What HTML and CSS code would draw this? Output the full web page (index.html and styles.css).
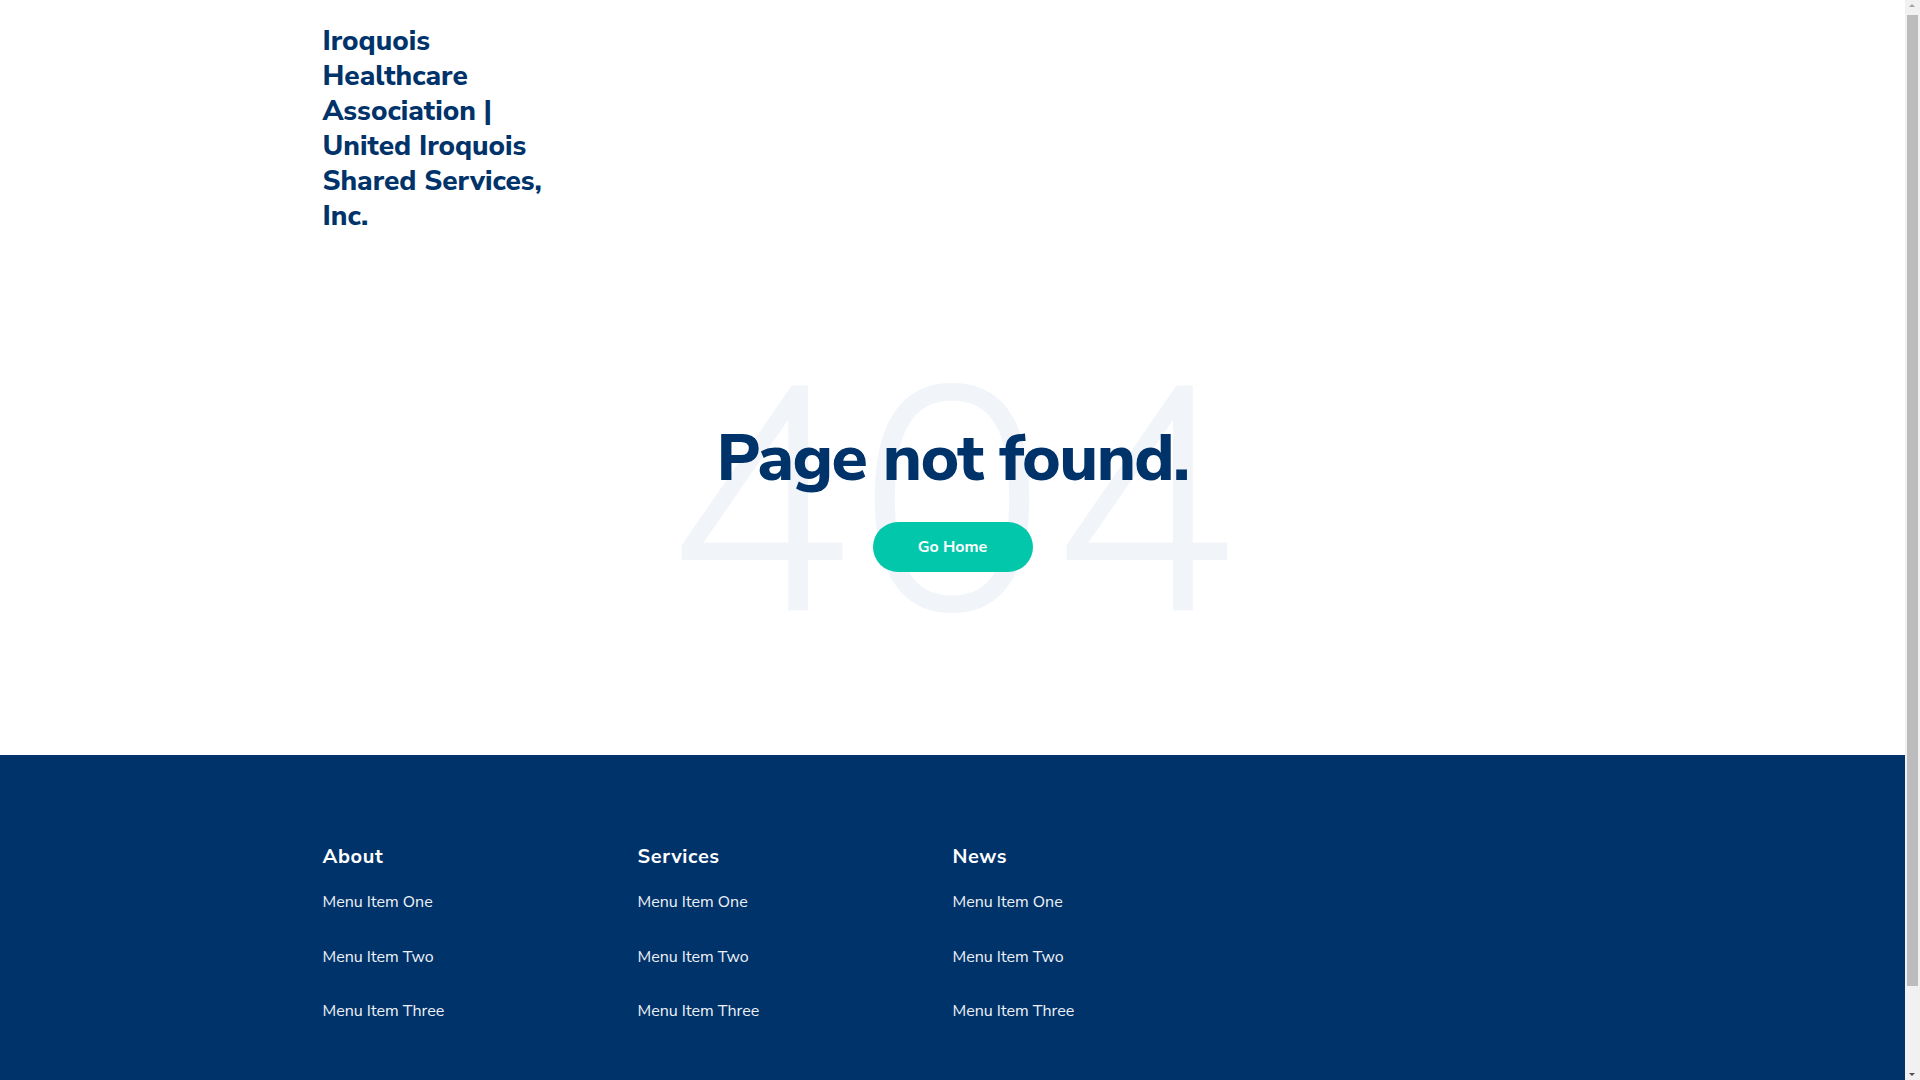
FILE: index.html
```html
<!DOCTYPE html>
<html lang="en">
<head>
<meta charset="utf-8">
<title>Page not found | Iroquois Healthcare Association</title>
<link rel="stylesheet" href="styles.css">
</head>
<body>
<div class="page">
  <header class="site-header">
    <div class="container">
      <a class="logo" href="#">Iroquois Healthcare Association | United Iroquois Shared Services, Inc.</a>
    </div>
  </header>

  <main class="notfound">
    <div class="bg-number" aria-hidden="true">404</div>
    <div class="notfound-content">
      <h1 class="notfound-title">Page not found.</h1>
      <a class="btn-home" href="#">Go Home</a>
    </div>
  </main>

  <footer class="site-footer">
    <div class="container footer-grid">
      <div class="footer-col">
        <h4 class="footer-heading">About</h4>
        <ul class="footer-menu">
          <li><a href="#">Menu Item One</a></li>
          <li><a href="#">Menu Item Two</a></li>
          <li><a href="#">Menu Item Three</a></li>
        </ul>
      </div>
      <div class="footer-col">
        <h4 class="footer-heading">Services</h4>
        <ul class="footer-menu">
          <li><a href="#">Menu Item One</a></li>
          <li><a href="#">Menu Item Two</a></li>
          <li><a href="#">Menu Item Three</a></li>
        </ul>
      </div>
      <div class="footer-col">
        <h4 class="footer-heading">News</h4>
        <ul class="footer-menu">
          <li><a href="#">Menu Item One</a></li>
          <li><a href="#">Menu Item Two</a></li>
          <li><a href="#">Menu Item Three</a></li>
        </ul>
      </div>
      <div class="footer-col"></div>
    </div>
  </footer>
</div>

<div class="scrollbar" aria-hidden="true">
  <span class="scroll-arrow up"></span>
  <span class="scroll-thumb"></span>
  <span class="scroll-arrow down"></span>
</div>
</body>
</html>
```

FILE: styles.css
```css
* { box-sizing: border-box; }

html, body {
  margin: 0;
  padding: 0;
}

body {
  font-family: "Nunito Sans", Lato, "Open Sans", "Liberation Sans", sans-serif;
  color: #01336b;
  background: #ffffff;
}

a { text-decoration: none; color: inherit; }

.page {
  margin-right: 15px;
}

.container {
  width: 1260px;
  margin: 0 auto;
}

/* Header */
.site-header {
  height: 240px;
  padding-top: 24px;
}

.logo {
  display: block;
  width: 240px;
  font-size: 28px;
  line-height: 35px;
  font-weight: 800;
  color: #01336b;
}

/* 404 area */
.notfound {
  position: relative;
  height: 515px;
  padding-top: 175px;
  overflow: hidden;
}

.bg-number {
  position: absolute;
  left: 50%;
  top: 50%;
  transform: translate(-50%, -50%);
  margin-top: 8px;
  font-size: 319px;
  line-height: 1;
  font-weight: 300;
  color: #f1f5f9;
  letter-spacing: 1px;
  white-space: nowrap;
  z-index: 0;
}

.notfound-content {
  position: relative;
  z-index: 1;
  display: flex;
  flex-direction: column;
  align-items: center;
  gap: 21px;
}

.notfound-title {
  margin: 0;
  font-size: 66px;
  line-height: 86px;
  font-weight: 800;
  color: #01336b;
  letter-spacing: -1.6px;
}

.btn-home {
  display: flex;
  align-items: center;
  justify-content: center;
  width: 160px;
  height: 50px;
  border-radius: 25px;
  background: #02c7aa;
  color: #ffffff;
  font-size: 16px;
  font-weight: 700;
}

/* Footer */
.site-footer {
  background: #01336b;
  padding-top: 90px;
  padding-bottom: 140px;
}

.footer-grid {
  display: grid;
  grid-template-columns: repeat(4, 1fr);
}

.footer-heading {
  margin: 0 0 23px;
  font-size: 20px;
  line-height: 24px;
  font-weight: 700;
  letter-spacing: 0.6px;
  color: #ffffff;
}

.footer-menu {
  list-style: none;
  margin: 0;
  padding: 0;
  display: flex;
  flex-direction: column;
  gap: 34.5px;
}

.footer-menu li {
  font-size: 16px;
  line-height: 20px;
  color: #eef2f7;
}

/* Simulated browser scrollbar (overlay) */
.scrollbar {
  position: fixed;
  top: 0;
  right: 0;
  width: 15px;
  height: 100vh;
  background: #f1f1f1;
  z-index: 10;
}

.scroll-thumb {
  position: absolute;
  top: 15px;
  left: 2px;
  width: 11px;
  height: 971px;
  background: #bcbcbc;
}

.scroll-arrow {
  position: absolute;
  left: 4px;
  width: 0;
  height: 0;
  border-left: 3.5px solid transparent;
  border-right: 3.5px solid transparent;
}

.scroll-arrow.up {
  top: 4px;
  border-bottom: 3.5px solid #a3a3a3;
}

.scroll-arrow.down {
  bottom: 4px;
  border-top: 3.5px solid #505050;
}
```
